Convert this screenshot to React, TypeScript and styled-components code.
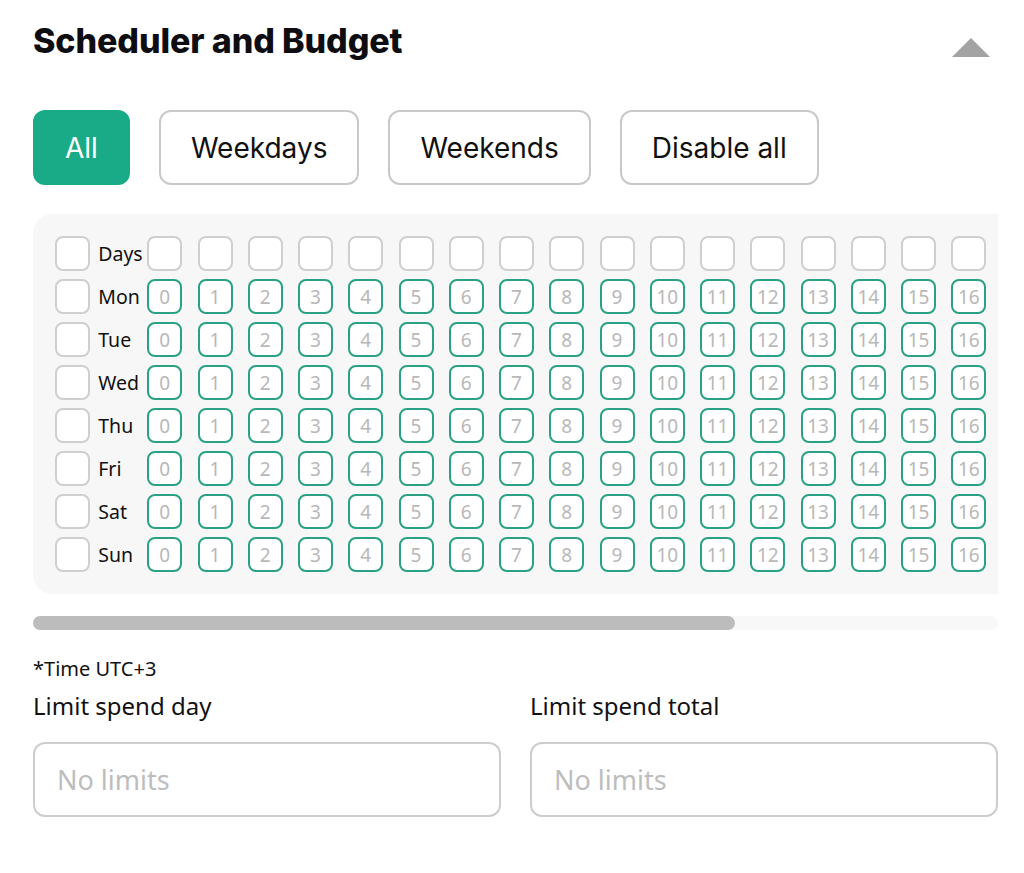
import { useEffect, useRef, useState } from "react";
import styled, { createGlobalStyle } from "styled-components";

const days = ["Mon", "Tue", "Wed", "Thu", "Fri", "Sat", "Sun"];
const hours = Array.from({ length: 24 }, (_, i) => i);
const filters = ["All", "Weekdays", "Weekends", "Disable all"];

export default function App() {
    const [filter, setFilter] = useState("All");
    const scrollRef = useRef<HTMLDivElement>(null);
    const [thumb, setThumb] = useState({ width: 72.5, left: 0 });

    const updateThumb = () => {
        const el = scrollRef.current;
        if (!el) return;
        const width = (el.clientWidth / el.scrollWidth) * 100;
        const left = (el.scrollLeft / el.scrollWidth) * 100;
        setThumb({ width, left });
    };

    useEffect(() => {
        updateThumb();
        window.addEventListener("resize", updateThumb);
        return () => window.removeEventListener("resize", updateThumb);
    }, []);

    return (
        <>
            <GlobalStyle />
            <Page>
                <Header>
                    <Title>Scheduler and Budget</Title>
                    <Collapse aria-label="collapse">
                        <svg width="40" height="20" viewBox="0 0 40 20">
                            <path d="M20 1 L39 20 L1 20 Z" fill="#a3a3a3" />
                        </svg>
                    </Collapse>
                </Header>

                <Filters>
                    {filters.map((f) => (
                        <FilterButton key={f} $active={f === filter} onClick={() => setFilter(f)}>
                            {f}
                        </FilterButton>
                    ))}
                </Filters>

                <Scroller ref={scrollRef} onScroll={updateThumb}>
                    <Grid>
                        <Row>
                            <Check />
                            <DayLabel>Days</DayLabel>
                            {hours.map((h) => (
                                <HourCell key={h} $empty />
                            ))}
                        </Row>
                        {days.map((d) => (
                            <Row key={d}>
                                <Check />
                                <DayLabel>{d}</DayLabel>
                                {hours.map((h) => (
                                    <HourCell key={h}>{h}</HourCell>
                                ))}
                            </Row>
                        ))}
                    </Grid>
                </Scroller>
                <Track>
                    <Thumb style={{ width: `${thumb.width}%`, marginLeft: `${thumb.left}%` }} />
                </Track>

                <Note>*Time UTC+3</Note>

                <Limits>
                    <Field>
                        <FieldLabel>Limit spend day</FieldLabel>
                        <Input placeholder="No limits" />
                    </Field>
                    <Field>
                        <FieldLabel>Limit spend total</FieldLabel>
                        <Input placeholder="No limits" />
                    </Field>
                </Limits>
            </Page>
        </>
    );
}

const GlobalStyle = createGlobalStyle`
body {
    margin: 0;
    background: #fff;
    font-family: "Noto Sans", Roboto, sans-serif;
    color: #111;
}
`

const Page = styled.div`
padding: 19px 26px 40px 33px;
`

const Header = styled.div`
display: flex;
justify-content: space-between;
align-items: flex-start;
`

const Title = styled.h1`
margin: 0;
font-family: Inter, sans-serif;
font-weight: 800;
font-size: 34px;
line-height: 44px;
letter-spacing: -0.1px;
color: #0d0d12;
`

const Collapse = styled.button`
border: none;
background: none;
padding: 0;
margin: 18px 7px 0 0;
cursor: pointer;
display: flex;
`

const Filters = styled.div`
display: flex;
gap: 29px;
margin-top: 47px;
`

const FilterButton = styled.button<{ $active?: boolean }>`
height: 75px;
padding: 0 30px;
border-radius: 12px;
border: 2px solid ${(p) => (p.$active ? "#19ab87" : "#c9c9c9")};
background: ${(p) => (p.$active ? "#19ab87" : "#fff")};
color: ${(p) => (p.$active ? "#fff" : "#111")};
font-family: Inter, sans-serif;
font-size: 28px;
cursor: pointer;
`

const Scroller = styled.div`
margin-top: 29px;
overflow-x: auto;
scrollbar-width: none;

&::-webkit-scrollbar {
    display: none;
}
`

const Track = styled.div`
margin-top: 22px;
height: 14px;
border-radius: 7px;
background: #f8f8f8;
display: flex;
`

const Thumb = styled.div`
height: 100%;
border-radius: 7px;
background: #bcbcbc;
`

const Grid = styled.div`
display: inline-flex;
flex-direction: column;
gap: 8px;
padding: 22px;
background: #f7f7f7;
border-radius: 20px;
`

const Row = styled.div`
display: flex;
align-items: center;
gap: 15.25px;
`

const Check = styled.div`
width: 35px;
height: 35px;
box-sizing: border-box;
border: 2px solid #cfcfcf;
border-radius: 8px;
background: #fff;
flex-shrink: 0;
margin-right: -7px;
`

const DayLabel = styled.span`
width: 49px;
margin-right: -15.25px;
font-size: 19.5px;
color: #111;
flex-shrink: 0;
`

const HourCell = styled.div<{ $empty?: boolean }>`
width: 35px;
height: 35px;
box-sizing: border-box;
flex-shrink: 0;
border: 2px solid ${(p) => (p.$empty ? "#cfcfcf" : "#2aa184")};
border-radius: 8px;
background: #fff;
display: flex;
align-items: center;
justify-content: center;
font-size: 19px;
color: #b8b8b8;
`

const Note = styled.div`
margin-top: 26px;
font-size: 20px;
line-height: 26px;
color: #111;
`

const Limits = styled.div`
display: grid;
grid-template-columns: 1fr 1fr;
gap: 29px;
margin-top: 8px;
`

const Field = styled.label`
display: flex;
flex-direction: column;
gap: 20px;
`

const FieldLabel = styled.span`
font-size: 24px;
line-height: 32px;
color: #111;
`

const Input = styled.input`
height: 75px;
box-sizing: border-box;
border: 2px solid #cdcdcd;
border-radius: 12px;
padding: 0 22px;
font-family: "Noto Sans", Roboto, sans-serif;
font-size: 27px;
outline: none;

&::placeholder {
    color: #bdbdbd;
}
`
